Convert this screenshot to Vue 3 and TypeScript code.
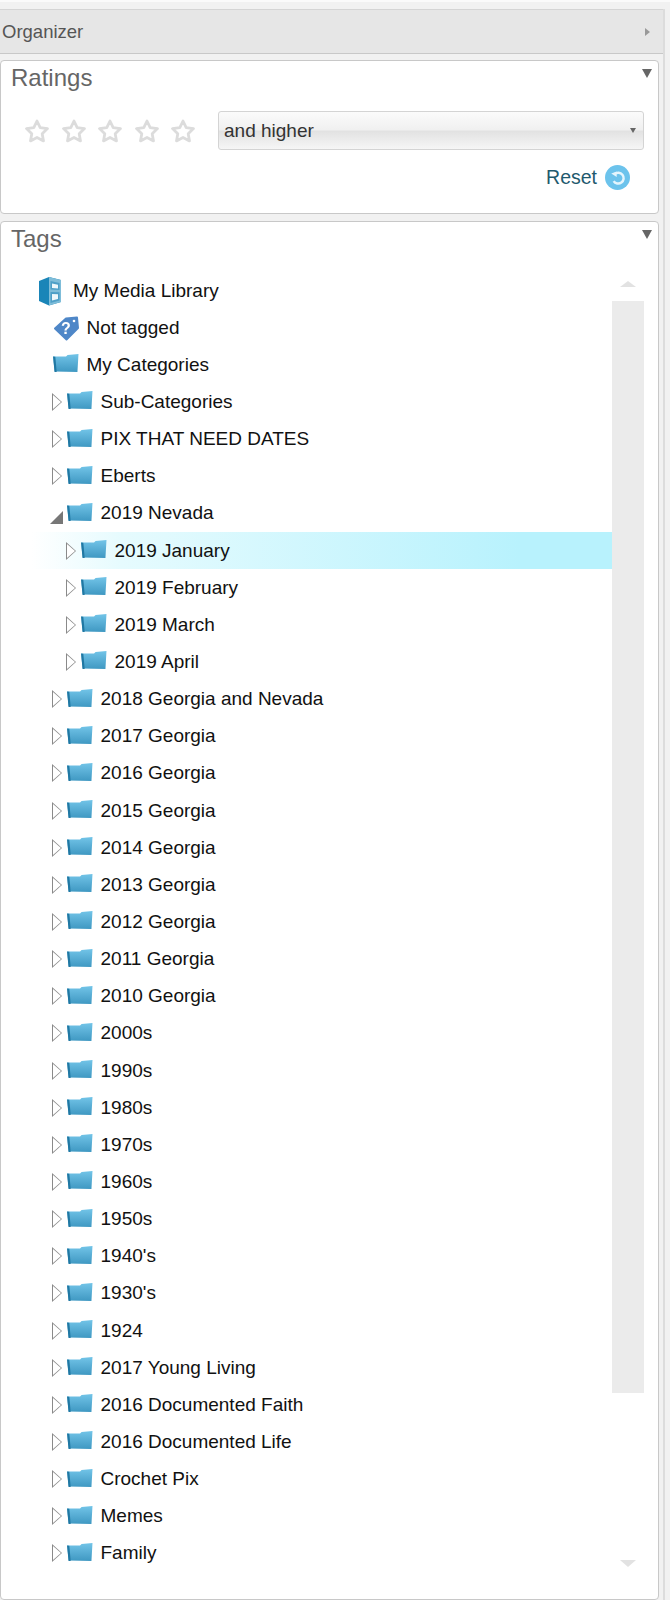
<script setup lang="ts">
interface TreeRow {
  label: string
  depth: number
  expander?: 'open' | 'closed'
  icon: 'library' | 'tag' | 'folder'
  selected?: boolean
}

const closed = (label: string, depth = 1): TreeRow => ({ label, depth, expander: 'closed', icon: 'folder' })

const rows: TreeRow[] = [
  { label: 'My Media Library', depth: -1, icon: 'library' },
  { label: 'Not tagged', depth: 0, icon: 'tag' },
  { label: 'My Categories', depth: 0, icon: 'folder' },
  closed('Sub-Categories'),
  closed('PIX THAT NEED DATES'),
  closed('Eberts'),
  { label: '2019 Nevada', depth: 1, expander: 'open', icon: 'folder' },
  { ...closed('2019 January', 2), selected: true },
  closed('2019 February', 2),
  closed('2019 March', 2),
  closed('2019 April', 2),
  ...[
    '2018 Georgia and Nevada', '2017 Georgia', '2016 Georgia', '2015 Georgia', '2014 Georgia',
    '2013 Georgia', '2012 Georgia', '2011 Georgia', '2010 Georgia', '2000s', '1990s', '1980s',
    '1970s', '1960s', '1950s', "1940's", "1930's", '1924', '2017 Young Living',
    '2016 Documented Faith', '2016 Documented Life', 'Crochet Pix', 'Memes', 'Family',
  ].map((label) => closed(label)),
]

const stars = [1, 2, 3, 4, 5]
</script>

<template>
  <div class="page">
    <div class="top-strip"></div>
    <div class="organizer">
      <header class="organizer-head">
        <span>Organizer</span>
        <i class="organizer-arrow"></i>
      </header>

      <section class="panel ratings">
        <h2 class="panel-title">Ratings</h2>
        <i class="collapse"></i>
        <div class="rating-line">
          <div class="stars">
            <svg v-for="s in stars" :key="s" class="star" viewBox="0 0 26 26">
              <path
                d="M13 3L16.200 9.600 23.500 10.600 18.200 15.700 19.500 22.900 13 19.500 6.500 22.900 7.800 15.700 2.500 10.600 9.800 9.600Z"
                fill="#fff"
                stroke="#dcdcdc"
                stroke-width="2.800"
                stroke-linejoin="round"
              />
            </svg>
          </div>
          <div class="select">
            <span>and higher</span>
            <i class="select-arrow"></i>
          </div>
        </div>
        <div class="reset">
          <span>Reset</span>
          <svg class="reset-icon" viewBox="0 0 24 24">
            <circle cx="12" cy="12" r="12" fill="#6cc3ec" />
            <path d="M9.200 8.800a5.200 5.200 0 1 1-.9 6.600" fill="none" stroke="#e4f5fd" stroke-width="2.400" />
            <path d="M6 8.200l5.200-2v5.200z" fill="#e4f5fd" />
          </svg>
        </div>
      </section>

      <section class="panel tags">
        <h2 class="panel-title">Tags</h2>
        <i class="collapse"></i>
        <div class="tree-wrap">
          <ul class="tree">
            <li
              v-for="row in rows"
              :key="row.label"
              class="row"
              :class="[`depth-${row.depth + 1}`, { selected: row.selected }]"
            >
              <span v-if="row.expander" class="expander" :class="row.expander"></span>

              <svg v-if="row.icon === 'library'" class="icon library" viewBox="0 0 24 30">
                <path d="M1 5l10-4 12 3v22l-12 3.500-10-4.500z" fill="#1a85b8" />
                <path d="M11 1l12 3v22l-12 3.500z" fill="#7fbdd9" />
                <path d="M12.500 5l9 2v7l-9-.5zM12.500 16l9 .3v8.200l-9 2.500z" fill="#4e9fc7" />
                <path d="M14 7.500l6 1.200v3.800l-6-.4zM14 18l6 .2v4.800l-6 1.500z" fill="#eef7fb" />
              </svg>

              <svg v-else-if="row.icon === 'tag'" class="icon tag" viewBox="0 0 27 26">
                <path
                  d="M2 13.500L13 3.500 24 2.500 25 13 13.500 24.500Z"
                  fill="#4f87c8"
                  stroke="#4f87c8"
                  stroke-width="2"
                  stroke-linejoin="round"
                />
                <circle cx="21" cy="6" r="1.300" fill="#fff" />
                <text x="13" y="19" class="tag-mark">?</text>
              </svg>

              <svg v-else class="icon folder" viewBox="0 0 26 18" preserveAspectRatio="none">
                <defs>
                  <linearGradient id="folder-fill" x1="0" y1="0" x2="0" y2="1">
                    <stop offset="0" stop-color="#72c4e8" />
                    <stop offset="1" stop-color="#3f98c2" />
                  </linearGradient>
                </defs>
                <path d="M1 2.500l1.500 15 22 .5 1-18-10.500 1-1.500 1.500z" fill="url(#folder-fill)" />
                <path d="M1 2.500l2.200.2 1.300 15.300-2 0z" fill="#2078a3" />
              </svg>

              <span class="label">{{ row.label }}</span>
            </li>
          </ul>
          <div class="scrollbar">
            <i class="scroll-up"></i>
            <div class="scroll-thumb"></div>
            <i class="scroll-down"></i>
          </div>
        </div>
      </section>
    </div>
  </div>
</template>

<style>
html,
body {
  margin: 0;
  background: #f1f1f1;
}
</style>

<style scoped>
.page {
  width: 670px;
  height: 1600px;
  overflow: hidden;
  font-family: "Liberation Sans", Arial, sans-serif;
  background: #f1f1f1;
}

.top-strip {
  height: 9px;
  box-sizing: border-box;
  border-top: 2px solid #fafafa;
}

.organizer {
  width: 665px;
  height: 1591px;
  box-sizing: border-box;
  border-right: 2px solid #dcdcdc;
  display: flex;
  flex-direction: column;
}

.organizer-head {
  height: 45px;
  box-sizing: border-box;
  border-top: 1px solid #d4d4d4;
  border-bottom: 1px solid #c8c8c8;
  background: #e6e6e6;
  display: flex;
  align-items: center;
  justify-content: space-between;
  padding: 0 13px 0 2px;
  font-size: 18.500px;
  color: #555;
}

.organizer-arrow {
  border-left: 5px solid #999;
  border-top: 4px solid transparent;
  border-bottom: 4px solid transparent;
}

.panel {
  position: relative;
  width: 659px;
  box-sizing: border-box;
  background: #fff;
  border: 1px solid #c8c8c8;
  border-radius: 4px;
}

.ratings {
  height: 154px;
  margin-top: 6px;
  padding: 4px 0 0 10px;
}

.tags {
  flex: 1;
  margin-top: 7px;
  padding: 4px 0 0 10px;
}

.panel-title {
  margin: 0;
  font-size: 24px;
  line-height: 26px;
  font-weight: 400;
  color: #666;
}

.collapse {
  position: absolute;
  top: 8px;
  right: 6px;
  border-top: 9px solid #666;
  border-left: 5px solid transparent;
  border-right: 5px solid transparent;
}

.rating-line {
  display: flex;
  align-items: center;
  margin-top: 20px;
}

.stars {
  display: flex;
  gap: 10.500px;
  margin-left: 13px;
}

.star {
  width: 26px;
  height: 26px;
  filter: blur(0.6px);
}

.select {
  width: 426px;
  height: 39px;
  box-sizing: border-box;
  margin-left: 22px;
  border: 1px solid #d4d4d4;
  border-radius: 3px;
  background: linear-gradient(#fbfbfb, #f0f0f0 48%, #e2e2e2 52%, #f6f6f6);
  display: flex;
  align-items: center;
  justify-content: space-between;
  padding: 0 7px 0 5px;
  font-size: 19px;
  color: #333;
}

.select-arrow {
  border-top: 5px solid #666;
  border-left: 3.500px solid transparent;
  border-right: 3.500px solid transparent;
}

.reset {
  display: flex;
  align-items: center;
  justify-content: flex-end;
  gap: 8px;
  margin-top: 15px;
  padding-right: 28px;
  font-size: 19.500px;
  color: #1f5a6e;
}

.reset-icon {
  width: 25px;
  height: 25px;
}

.tree-wrap {
  position: relative;
}

.tree {
  margin: 0;
  padding: 20px 0 0;
  list-style: none;
}

.row {
  display: flex;
  align-items: center;
  height: 37.150px;
  margin-left: -10px;
  margin-right: 46px;
  font-size: 19px;
  color: #111;
}

.depth-0 {
  padding-left: 37px;
}

.depth-1 {
  padding-left: 51px;
}

.depth-2 {
  padding-left: 51px;
}

.depth-3 {
  padding-left: 65px;
}

.selected {
  background: linear-gradient(90deg, #fff 30px, #e6fbfe 120px, #b8f2fd 85%);
}

.expander {
  width: 0;
  height: 0;
  margin-right: 4px;
  position: relative;
  border-left: 10px solid #8a8a8a;
  border-top: 9px solid transparent;
  border-bottom: 9px solid transparent;
}

.expander.closed::after {
  content: "";
  position: absolute;
  left: -9px;
  top: -7px;
  border-left: 8px solid #fff;
  border-top: 7px solid transparent;
  border-bottom: 7px solid transparent;
}

.expander.open {
  border: 0;
  border-bottom: 13px solid #777;
  border-left: 13px solid transparent;
  margin-left: -2px;
  margin-right: 3px;
  margin-top: 8px;
}

.icon {
  flex: none;
  filter: blur(0.5px);
}

.library {
  width: 24px;
  height: 30px;
  margin-right: 11px;
}

.tag {
  width: 27px;
  height: 26px;
  margin-left: 1px;
  margin-right: 6.500px;
}

.tag-mark {
  font-family: "Liberation Sans", Arial, sans-serif;
  font-size: 16px;
  font-weight: 700;
  fill: #fff;
  text-anchor: middle;
}

.folder {
  width: 27px;
  height: 18px;
  margin-right: 7.500px;
  margin-top: -3px;
}

.scrollbar {
  position: absolute;
  top: 0;
  right: 14px;
  bottom: 0;
  width: 32px;
}

.scroll-up,
.scroll-down {
  position: absolute;
  left: 8px;
  border-left: 8px solid transparent;
  border-right: 8px solid transparent;
}

.scroll-up {
  top: 29px;
  border-bottom: 6px solid #e2e2e2;
}

.scroll-down {
  top: 1308px;
  border-top: 7px solid #e2e2e2;
}

.scroll-thumb {
  margin-top: 49px;
  height: 1092px;
  background: #ebebeb;
}
</style>
